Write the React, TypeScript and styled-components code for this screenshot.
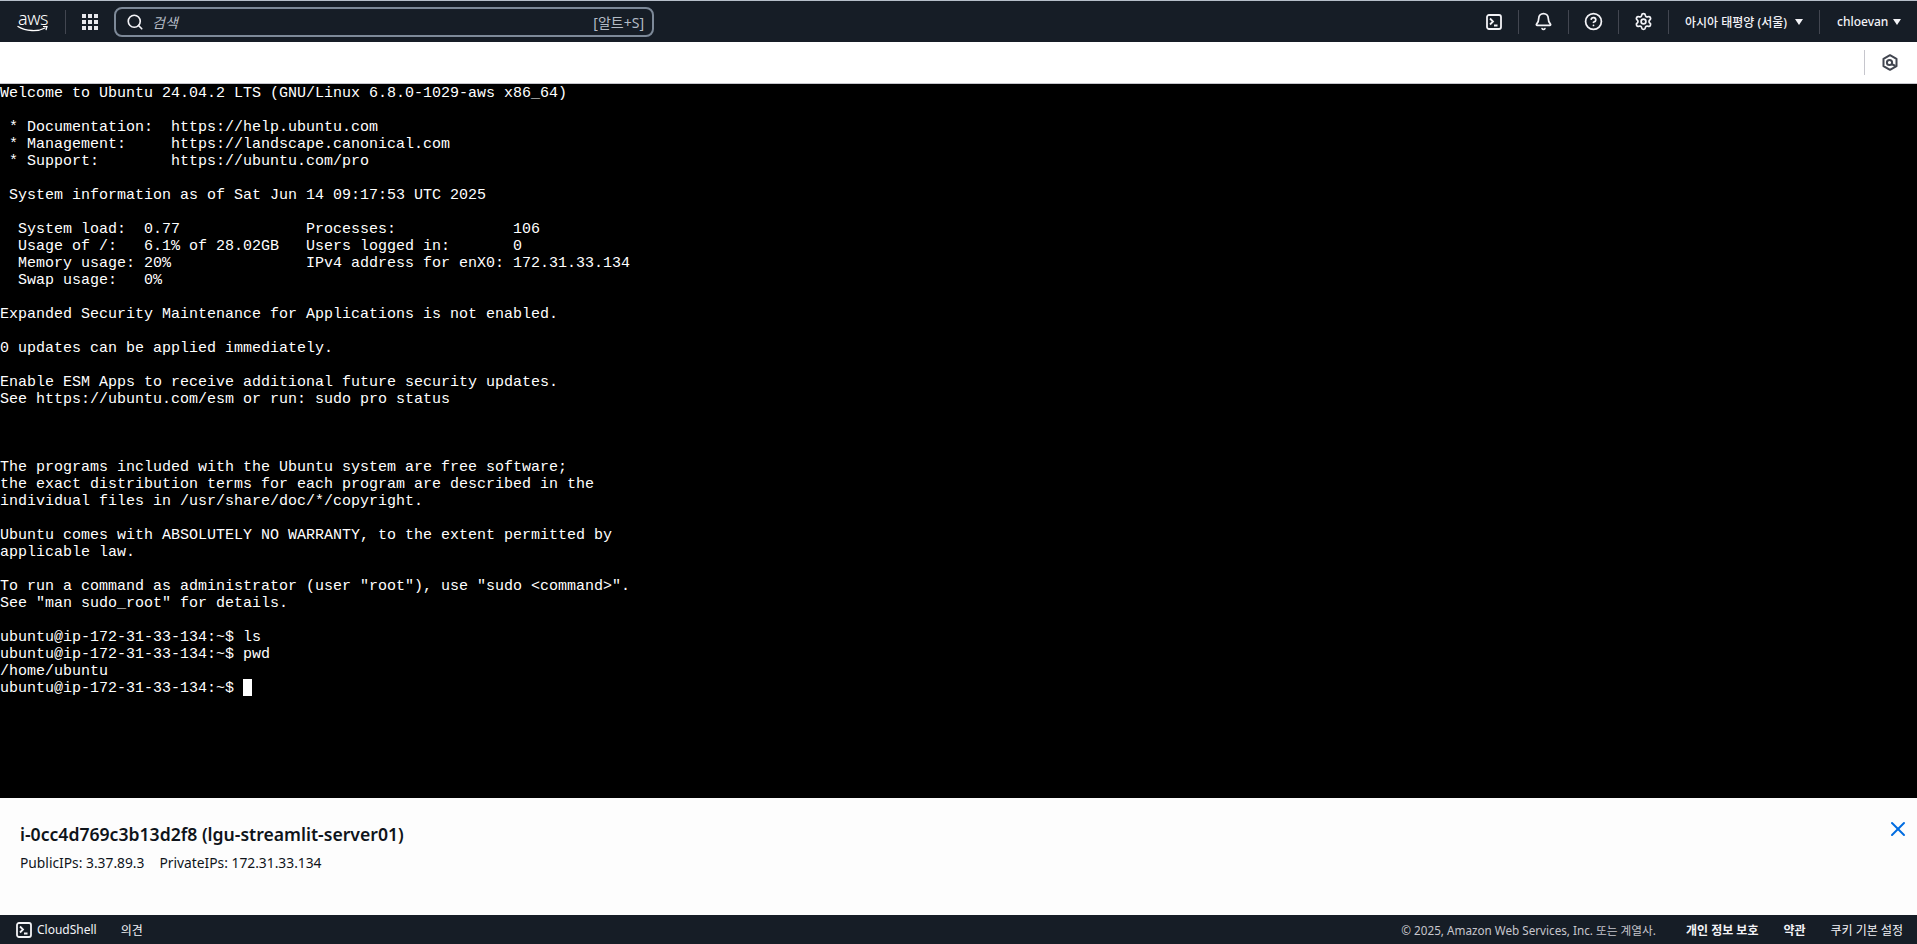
import React from "react";
import styled, { createGlobalStyle } from "styled-components";
import { Bell, CircleHelp, Search, Settings, X } from "lucide-react";

const GlobalStyle = createGlobalStyle`
  html, body {
    margin: 0;
    padding: 0;
    height: 100%;
    overflow: hidden;
    background: #000;
  }
  * {
    box-sizing: border-box;
  }
`;

const uiFont = `"Noto Sans", "Noto Sans CJK KR", sans-serif`;

const Page = styled.div`
  display: flex;
  flex-direction: column;
  width: 100vw;
  height: 100vh;
  font-family: ${uiFont};
`;

const Header = styled.header`
  display: flex;
  flex: none;
  align-items: center;
  height: 42px;
  padding-left: 17px;
  border-top: 1px solid #b6bec9;
  background: #161d26;
  color: #fff;
`;

const LogoWrap = styled.div`
  display: flex;
  flex-direction: column;
  align-items: center;
  width: 32px;
  color: #fff;
`;

const LogoText = styled.span`
  font-size: 18px;
  font-weight: 300;
  line-height: 14px;
  letter-spacing: -0.4px;
`;

const HeaderDivider = styled.span<{ $margin?: string; $hidden?: boolean }>`
  flex: none;
  width: 1px;
  height: 24px;
  margin: ${({ $margin }) => $margin || "0"};
  background: ${({ $hidden }) => ($hidden ? "transparent" : "#424650")};
`;

const SearchBox = styled.div`
  display: flex;
  align-items: center;
  width: 540px;
  height: 30px;
  margin-left: 16px;
  padding: 0 8px 0 10px;
  border: 2px solid #7d8998;
  border-radius: 8px;
`;

const Placeholder = styled.span`
  flex: 1;
  margin-left: 8px;
  color: #b4bbc5;
  font-size: 14px;
  font-style: italic;
`;

const Shortcut = styled.span`
  color: #b4bbc5;
  font-size: 14px;
`;

const HeaderRight = styled.div`
  display: flex;
  align-items: center;
  margin-left: auto;
`;

const IconSlot = styled.span`
  display: flex;
  justify-content: center;
  align-items: center;
  width: 49px;
  color: #f3f3f7;
`;

const MenuLabel = styled.span<{ $width: number }>`
  display: flex;
  align-items: center;
  justify-content: space-between;
  width: ${({ $width }) => $width}px;
  color: #f3f3f7;
  font-size: 12px;
  font-weight: 500;
  white-space: nowrap;
`;

const Caret = styled.i`
  display: block;
  width: 0;
  height: 0;
  border-top: 6px solid #f3f3f7;
  border-right: 4.5px solid transparent;
  border-left: 4.5px solid transparent;
`;

const SubBar = styled.div`
  display: flex;
  flex: none;
  align-items: center;
  justify-content: flex-end;
  height: 42px;
  padding-right: 19px;
  border-bottom: 1px solid #c6c6cd;
  background: #fff;
`;

const SubDivider = styled.span`
  width: 1px;
  height: 25px;
  margin-right: 17px;
  background: #c6c6cd;
`;

const Terminal = styled.pre`
  flex: 1;
  min-height: 0;
  margin: 0;
  padding-top: 1px;
  overflow: hidden;
  background: #000;
  color: #fff;
  font-family: "Liberation Mono", monospace;
  font-size: 15px;
  line-height: 17px;
`;

const Cursor = styled.span`
  display: inline-block;
  width: 9px;
  height: 17px;
  margin-top: -1px;
  background: #fff;
  vertical-align: top;
`;

const InfoPanel = styled.section`
  display: flex;
  flex: none;
  justify-content: space-between;
  height: 117px;
  padding: 24px 7px 0 20px;
  background: #fdfdfd;
  color: #0f141a;
`;

const InstanceTitle = styled.h2`
  margin: 0;
  font-size: 17.6px;
  font-weight: 600;
  line-height: 24px;
`;

const IpRow = styled.div`
  display: flex;
  gap: 15px;
  margin-top: 6px;
  font-size: 13.8px;
  line-height: 22px;
`;

const CloseButton = styled.span`
  display: block;
  height: 24px;
  margin-top: -5px;
  color: #006ce0;
`;

const Footer = styled.footer`
  display: flex;
  flex: none;
  align-items: center;
  height: 29px;
  padding: 0 14px 0 16px;
  background: #161d26;
  color: #d5dbdb;
  font-size: 12px;
`;

const FooterIconLabel = styled.span`
  display: flex;
  align-items: center;
  gap: 5px;
  color: #f3f3f7;
`;

const FooterLink = styled.span<{ $bold?: boolean; $left: number }>`
  margin-left: ${({ $left }) => $left}px;
  color: #f3f3f7;
  font-weight: ${({ $bold }) => ($bold ? 600 : 400)};
  white-space: nowrap;
`;

const Copyright = styled.span`
  margin-left: auto;
  color: #c6c6cd;
  font-size: 11.7px;
`;

const terminalText = `Welcome to Ubuntu 24.04.2 LTS (GNU/Linux 6.8.0-1029-aws x86_64)

 * Documentation:  https://help.ubuntu.com
 * Management:     https://landscape.canonical.com
 * Support:        https://ubuntu.com/pro

 System information as of Sat Jun 14 09:17:53 UTC 2025

  System load:  0.77              Processes:             106
  Usage of /:   6.1% of 28.02GB   Users logged in:       0
  Memory usage: 20%               IPv4 address for enX0: 172.31.33.134
  Swap usage:   0%

Expanded Security Maintenance for Applications is not enabled.

0 updates can be applied immediately.

Enable ESM Apps to receive additional future security updates.
See https://ubuntu.com/esm or run: sudo pro status



The programs included with the Ubuntu system are free software;
the exact distribution terms for each program are described in the
individual files in /usr/share/doc/*/copyright.

Ubuntu comes with ABSOLUTELY NO WARRANTY, to the extent permitted by
applicable law.

To run a command as administrator (user "root"), use "sudo <command>".
See "man sudo_root" for details.

ubuntu@ip-172-31-33-134:~$ ls
ubuntu@ip-172-31-33-134:~$ pwd
/home/ubuntu
ubuntu@ip-172-31-33-134:~$ `;

function TerminalIcon({ size }: { size: number }) {
  return (
    <svg width={size} height={size} viewBox="0 0 16 16" fill="none" stroke="currentColor" strokeWidth="1.8">
      <rect x="1" y="1" width="14" height="14" rx="2" />
      <path d="M4 4.5 7 7.5 4 10.5M8 11.5h3.5" />
    </svg>
  );
}

function GridIcon() {
  return (
    <svg width="16" height="16" viewBox="0 0 16 16" fill="#e8e8ec">
      {[0, 6, 12].map((y) =>
        [0, 6, 12].map((x) => <rect key={`${x}-${y}`} x={x} y={y} width="4" height="4" />)
      )}
    </svg>
  );
}

function HexIcon() {
  return (
    <svg width="16" height="17" viewBox="0 0 16 17" fill="none" stroke="#424650" strokeWidth="2">
      <path d="M8 1.2 14.5 4.8v7.4L8 15.8 1.5 12.2V4.8Z" strokeLinejoin="round" />
      <circle cx="7.5" cy="8.5" r="2.6" />
      <path d="M9.5 10 13.5 12" />
    </svg>
  );
}

function App() {
  return (
    <Page>
      <GlobalStyle />
      <Header>
        <LogoWrap>
          <LogoText>aws</LogoText>
          <svg width="32" height="8" viewBox="0 0 32 8" fill="none">
            <path d="M1 1.5C9 6.5 21 6.8 28 3" stroke="#fff" strokeWidth="1.4" strokeLinecap="round" />
            <path d="M26 1.5h4l-1 3.6" stroke="#fff" strokeWidth="1.2" />
          </svg>
        </LogoWrap>
        <HeaderDivider $margin="0 16px 0 16px" />
        <GridIcon />
        <SearchBox>
          <Search size={18} strokeWidth={2.2} color="#f3f3f7" />
          <Placeholder>검색</Placeholder>
          <Shortcut>[알트+S]</Shortcut>
        </SearchBox>
        <HeaderRight>
          <IconSlot>
            <TerminalIcon size={16} />
          </IconSlot>
          <HeaderDivider />
          <IconSlot>
            <Bell size={19} strokeWidth={2.2} />
          </IconSlot>
          <HeaderDivider />
          <IconSlot>
            <CircleHelp size={19} strokeWidth={2.2} />
          </IconSlot>
          <HeaderDivider />
          <IconSlot>
            <Settings size={19} strokeWidth={2.2} />
          </IconSlot>
          <HeaderDivider $margin="0 16px 0 0" />
          <MenuLabel $width={118}>
            아시아 태평양 (서울)
            <Caret />
          </MenuLabel>
          <HeaderDivider $margin="0 17px 0 16px" />
          <MenuLabel $width={64}>
            chloevan
            <Caret />
          </MenuLabel>
          <HeaderDivider $margin="0 15px 0 0" $hidden />
        </HeaderRight>
      </Header>
      <SubBar>
        <SubDivider />
        <HexIcon />
      </SubBar>
      <Terminal>
        {terminalText}
        <Cursor />
      </Terminal>
      <InfoPanel>
        <div>
          <InstanceTitle>i-0cc4d769c3b13d2f8 (lgu-streamlit-server01)</InstanceTitle>
          <IpRow>
            <span>PublicIPs: 3.37.89.3</span>
            <span>PrivateIPs: 172.31.33.134</span>
          </IpRow>
        </div>
        <CloseButton>
          <X size={24} strokeWidth={2} />
        </CloseButton>
      </InfoPanel>
      <Footer>
        <FooterIconLabel>
          <TerminalIcon size={16} />
          CloudShell
        </FooterIconLabel>
        <FooterLink $left={24}>의견</FooterLink>
        <Copyright>© 2025, Amazon Web Services, Inc. 또는 계열사.</Copyright>
        <FooterLink $bold $left={30}>개인 정보 보호</FooterLink>
        <FooterLink $bold $left={25}>약관</FooterLink>
        <FooterLink $left={25}>쿠키 기본 설정</FooterLink>
      </Footer>
    </Page>
  );
}

export default App;
